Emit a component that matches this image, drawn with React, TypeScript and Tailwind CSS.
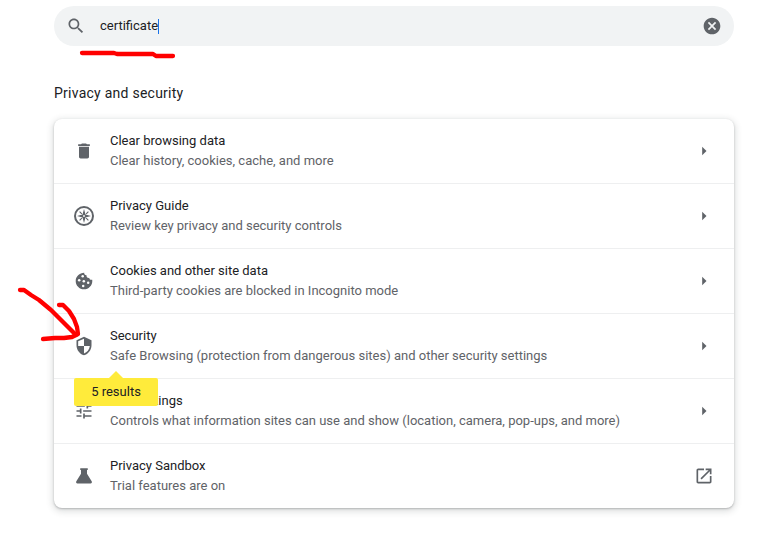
import React from "react";

function Icon({ children, className = "size-5" }: { children: React.ReactNode; className?: string }) {
  return (
    <svg viewBox="0 0 24 24" fill="currentColor" className={`${className} shrink-0 text-[#5f6368]`}>
      {children}
    </svg>
  );
}

const trash = (
  <Icon>
    <path d="M6 19c0 1.100.9 2 2 2h8c1.100 0 2-.9 2-2V7H6v12zM19 4h-3.500l-1-1h-5l-1 1H5v2h14V4z" />
  </Icon>
);

const compass = (
  <svg viewBox="0 0 20 20" className="size-5 shrink-0 text-[#5f6368]" fill="currentColor">
    <circle cx="10" cy="10" r="9" fill="none" stroke="currentColor" strokeWidth="2" />
    <path
      fillRule="evenodd"
      d="M10 3 11.500 8.500 17 10 11.500 11.500 10 17 8.500 11.500 3 10 8.500 8.500zM10 9.100a.9.9 0 1 0 0 1.800.9.9 0 0 0 0-1.800z"
    />
    <path d="M5.600 5.600l2.200 2.200M14.400 5.600l-2.200 2.200M5.600 14.400l2.200-2.200M14.400 14.400l-2.200-2.200" stroke="currentColor" strokeWidth="1.100" />
  </svg>
);

const cookie = (
  <svg viewBox="0 0 20 20" className="size-5 shrink-0 text-[#5f6368]">
    <path
      fill="currentColor"
      d="M10.200 1.700C5.500 1.700 1.700 5.400 1.700 10s3.700 8.300 8.300 8.300 8.300-3.700 8.300-8.300c0-.5 0-1-.1-1.300-1.500.3-2.700-.4-3-1.800-1.700.2-3-.9-2.700-2.600-1.600-.1-2.500-1.200-2.300-2.600z"
    />
    <g fill="#fff">
      <circle cx="8.700" cy="5.200" r="1.250" />
      <circle cx="5.200" cy="9.200" r="1.250" />
      <circle cx="9.800" cy="10.300" r="1.250" />
      <circle cx="14.200" cy="11.700" r="1.250" />
      <circle cx="9.200" cy="15" r="1.250" />
    </g>
  </svg>
);

const shield = (
  <Icon>
    <path d="M12 1 3 5v6c0 5.550 3.840 10.740 9 12 5.160-1.260 9-6.450 9-12V5l-9-4zm0 10.990h7c-.53 4.120-3.280 7.790-7 8.940V12H5V6.300l7-3.110v8.800z" />
  </Icon>
);

const tune = (
  <Icon>
    <path d="M3 17v2h6v-2H3zM3 5v2h10V5H3zm10 16v-2h8v-2h-8v-2h-2v6h2zM7 9v2H3v2h4v2h2V9H7zm14 4v-2H11v2h10zm-6-4h2V7h4V5h-4V3h-2v6z" />
  </Icon>
);

const flask = (
  <Icon>
    <path d="M7.500 2.600h9v2.200H15.600v4.400l5.600 9.200c.7 1.400.1 2.700-1.300 2.700H4.100c-1.400 0-2-1.300-1.300-2.700l5.600-9.200V4.800H7.500z" />
  </Icon>
);

const rows = [
  { icon: trash, title: "Clear browsing data", text: "Clear history, cookies, cache, and more" },
  { icon: compass, title: "Privacy Guide", text: "Review key privacy and security controls" },
  { icon: cookie, title: "Cookies and other site data", text: "Third-party cookies are blocked in Incognito mode" },
  {
    icon: shield,
    title: "Security",
    text: "Safe Browsing (protection from dangerous sites) and other security settings",
    results: "5 results",
  },
  {
    icon: tune,
    title: "Site Settings",
    text: "Controls what information sites can use and show (location, camera, pop-ups, and more)",
  },
  { icon: flask, title: "Privacy Sandbox", text: "Trial features are on", external: true },
];

function ResultBubble({ label }: { label: string }) {
  return (
    <div className="absolute left-5 top-16 z-10 flex h-7 w-[84px] items-center justify-center rounded-[2px] bg-[#ffeb3b] text-[#202124]">
      <svg viewBox="0 0 14 7" className="absolute -top-[7px] left-[35px] h-[7px] w-3.5">
        <path d="M0 7 7 0l7 7z" fill="#ffeb3b" />
      </svg>
      {label}
    </div>
  );
}

export default function App() {
  return (
    <main className="relative h-[552px] w-[778px] overflow-hidden bg-white px-[54px] pr-11 pt-1.5 font-['Roboto',sans-serif] text-[13px] leading-5 text-[#202124]">
      <div className="flex h-10 items-center rounded-full bg-[#f1f3f4] pl-3 pr-3">
        <Icon>
          <path d="M15.500 14h-.79l-.28-.27C15.410 12.590 16 11.110 16 9.500 16 5.910 13.090 3 9.500 3S3 5.910 3 9.500 5.910 16 9.500 16c1.610 0 3.090-.59 4.230-1.570l.27.28v.79l5 4.990L20.490 19l-4.990-5zm-6 0C7.010 14 5 11.990 5 9.500S7.010 5 9.500 5 14 7.010 14 9.500 11.990 14 9.500 14z" />
        </Icon>
        <span className="ml-3.5 w-[58px] whitespace-nowrap">certificate</span>
        <span className="h-[15px] w-px bg-[#1a73e8]" />
        <div className="ml-auto">
          <Icon>
            <path d="M12 2C6.470 2 2 6.470 2 12s4.470 10 10 10 10-4.470 10-10S17.530 2 12 2zm5 13.590L15.590 17 12 13.410 8.410 17 7 15.590 10.590 12 7 8.410 8.410 7 12 10.590 15.590 7 17 8.410 13.410 12 17 15.590z" />
          </Icon>
        </div>
      </div>

      <h2 className="mt-9 text-[14px] leading-[22px] tracking-[0.25px]">Privacy and security</h2>

      <section className="mt-[15px] rounded-lg bg-white shadow-[0_1px_2px_0_rgba(60,64,67,0.3),0_2px_6px_2px_rgba(60,64,67,0.15)]">
        {rows.map((row, i) => (
          <div
            key={row.title}
            className={`relative flex items-center px-5 ${i ? "h-[65px] border-t border-[#eeeff0]" : "h-16"}`}
          >
            {row.icon}
            <div className="ml-4 flex-1">
              <div>{row.title}</div>
              <div className="text-[#5f6368]">{row.text}</div>
            </div>
            {row.external ? (
              <Icon>
                <path d="M19 19H5V5h7V3H5c-1.110 0-2 .9-2 2v14c0 1.100.89 2 2 2h14c1.100 0 2-.9 2-2v-7h-2v7zM14 3v2h3.590l-9.830 9.830 1.410 1.410L19 6.410V10h2V3h-7z" />
              </Icon>
            ) : (
              <Icon>
                <path d="m9.800 17.200 5.200-5.200-5.200-5.200z" />
              </Icon>
            )}
            {row.results && <ResultBubble label={row.results} />}
          </div>
        ))}
      </section>

      <svg
        viewBox="0 0 778 552"
        className="pointer-events-none absolute inset-0 z-20 h-[552px] w-[778px]"
        fill="none"
        stroke="#f00"
        strokeWidth="4.300"
        strokeLinecap="round"
        strokeLinejoin="round"
      >
        <path d="M82 53h32l3 1h36l3 2h17" />
        <path d="M20 290h4l7 5 8 5 12 10 12 12 13 13" />
        <path d="M59 305h4l6 6 5 8 3 8 1 7-6 3-8 1H55l-12 1" />
      </svg>
    </main>
  );
}
